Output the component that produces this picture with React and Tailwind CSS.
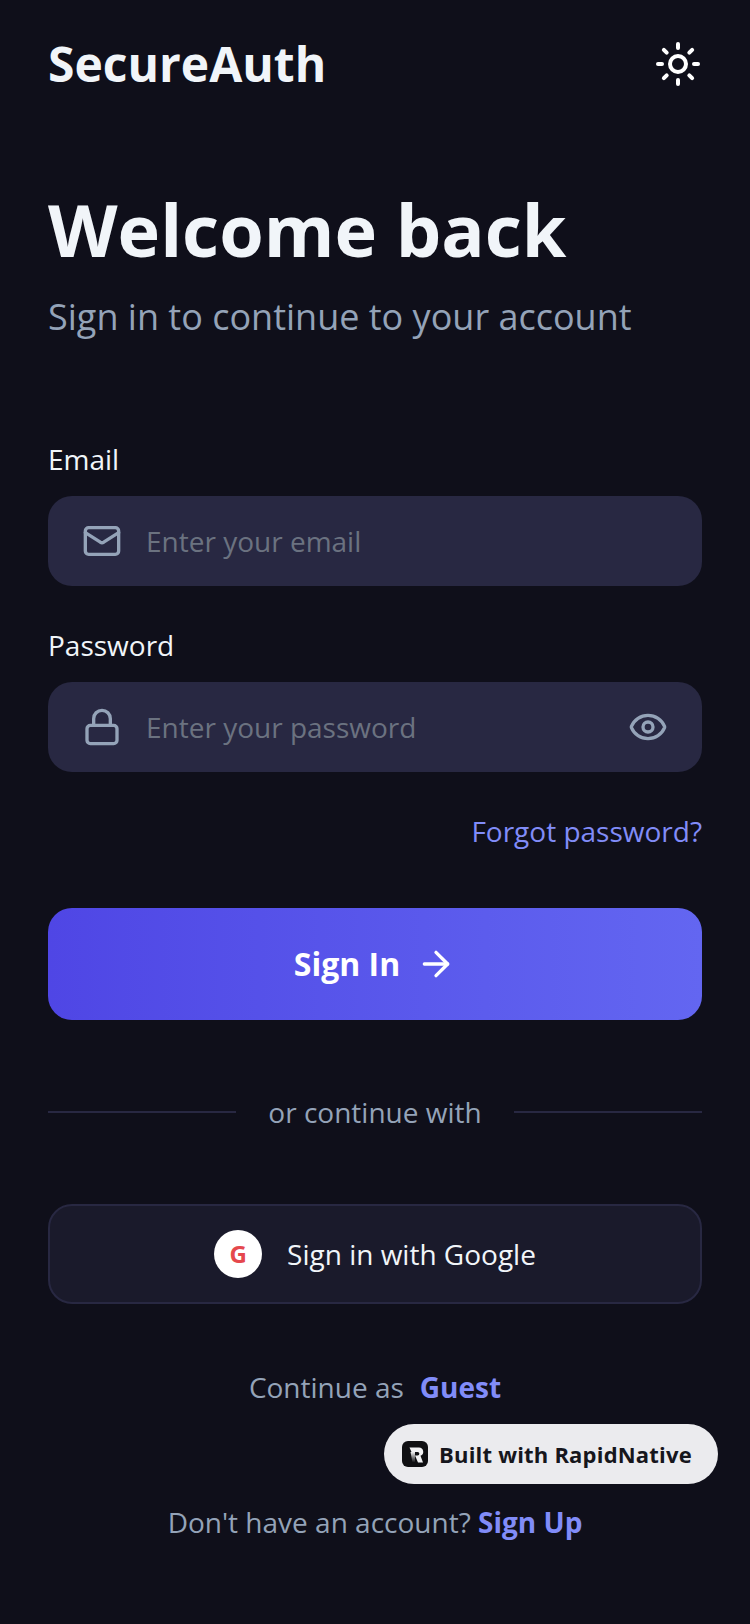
import React from 'react';
import { Sun, Mail, Lock, Eye, ArrowRight } from 'lucide-react';

const FONT = "font-['Open_Sans','Noto_Sans',sans-serif]";

function Field({ label, placeholder, icon: Icon, trailing }) {
  return (
    <div className="flex flex-col">
      <label className="text-[28px] leading-[38px] text-[#f1f5f9]">{label}</label>
      <div className="mt-[18px] flex h-[90px] items-center rounded-[24px] bg-[#282842] pl-[34px] pr-[34px]">
        <Icon size={40} strokeWidth={2} className="shrink-0 text-[#94a3b8]" />
        <span className="ml-[24px] flex-1 text-[28px] text-[#6b7280]">{placeholder}</span>
        {trailing}
      </div>
    </div>
  );
}

function BadgeLogo() {
  return (
    <svg width="26" height="26" viewBox="0 0 26 26" className="shrink-0">
      <defs>
        <linearGradient id="badgeStem" x1="0" y1="0" x2="0" y2="1">
          <stop offset="0" stopColor="#f1f1f3" />
          <stop offset="1" stopColor="#0f0f12" />
        </linearGradient>
      </defs>
      <rect width="26" height="26" rx="6" fill="#0f0f12" />
      <path d="M7.500 6.500H17a4.300 4.300 0 0 1 1.500 8.300L21 21.500h-5l-3-7h2.600a1.700 1.700 0 0 0 0-3.500H9.500z" fill="#f1f1f3" />
      <path d="M8.500 11H13v10.500H10.500z" fill="url(#badgeStem)" />
    </svg>
  );
}

export default function App() {
  return (
    <div className={`relative h-[1624px] w-[750px] overflow-hidden bg-[#0f0f1a] px-[48px] ${FONT}`}>
      <header className="flex h-[128px] items-center justify-between">
        <span className="text-[48px] font-bold text-[#f1f5f9]">SecureAuth</span>
        <Sun size={48} strokeWidth={2} className="text-white" />
      </header>

      <h1 className="mt-[52px] text-[72px] leading-[98px] font-bold text-[#f1f5f9]">Welcome back</h1>
      <p className="mt-[14px] text-[36px] leading-[50px] text-[#94a3b8]">Sign in to continue to your account</p>

      <div className="mt-[98px] flex flex-col gap-[40px]">
        <Field label="Email" placeholder="Enter your email" icon={Mail} />
        <Field
          label="Password"
          placeholder="Enter your password"
          icon={Lock}
          trailing={<Eye size={40} strokeWidth={2} className="shrink-0 text-[#94a3b8]" />}
        />
      </div>

      <div className="mt-[40px] text-right text-[28px] leading-[38px] text-[#818cf8]">Forgot password?</div>

      <button className="mt-[58px] flex h-[112px] w-full items-center justify-center gap-[16px] rounded-[24px] bg-gradient-to-r from-[#4f46e5] to-[#6366f1] text-[32px] font-bold text-white">
        Sign In
        <ArrowRight size={40} strokeWidth={2} />
      </button>

      <div className="mt-[73px] flex items-center">
        <div className="h-[2px] flex-1 bg-[#282842]" />
        <span className="mx-[32px] text-[28px] leading-[38px] text-[#94a3b8]">or continue with</span>
        <div className="h-[2px] flex-1 bg-[#282842]" />
      </div>

      <button className="mt-[73px] flex h-[100px] w-full items-center justify-center gap-[25px] rounded-[24px] border-2 border-[#282842] bg-[#1a1a2b] text-[28px] text-[#f1f5f9]">
        <span className="flex h-[48px] w-[48px] items-center justify-center rounded-full bg-white text-[24px] font-bold text-[#e5484d]">G</span>
        Sign in with Google
      </button>

      <div className="mt-[64px] flex items-center justify-center gap-[16px] text-[28px] leading-[38px] text-[#94a3b8]">
        <span>Continue as</span>
        <span className="font-bold text-[#818cf8]">Guest</span>
      </div>

      <div className="mt-[97px] text-center text-[28px] leading-[38px] text-[#94a3b8]">
        Don't have an account? <span className="font-bold text-[#818cf8]">Sign Up</span>
      </div>

      <div className="absolute left-[384px] top-[1424px] flex h-[60px] w-[334px] items-center gap-[11px] rounded-full bg-[#ebebee] pl-[18px] text-[22px] tracking-[0.2px] font-bold text-[#16161c]">
        <BadgeLogo />
        Built with RapidNative
      </div>
    </div>
  );
}
